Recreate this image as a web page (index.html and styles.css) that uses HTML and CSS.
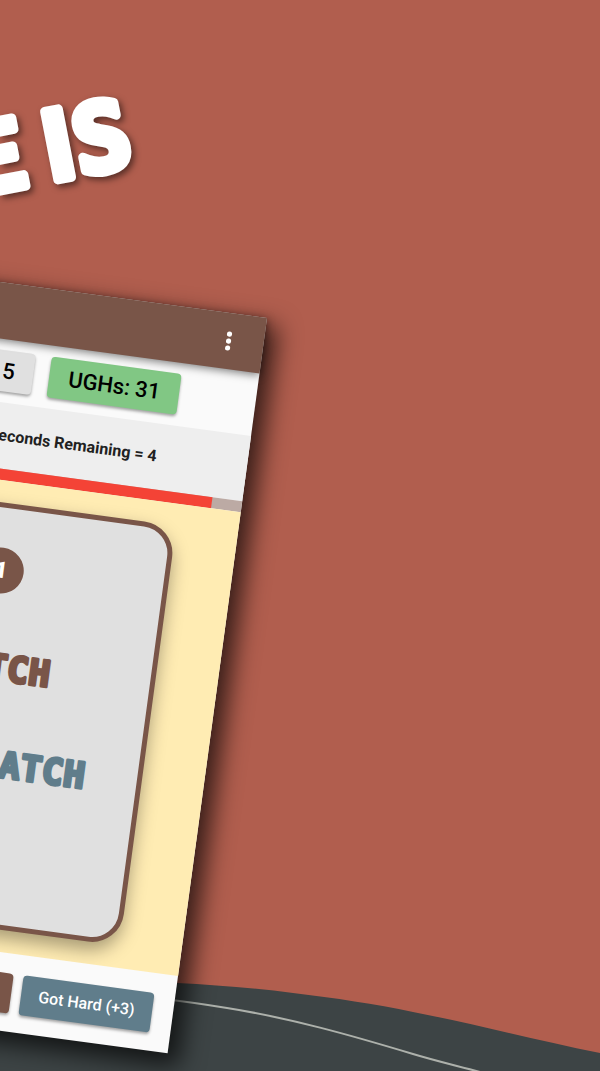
FILE: index.html
```html
<!DOCTYPE html>
<html lang="en">
<head>
<meta charset="utf-8">
<meta name="viewport" content="width=device-width, initial-scale=1">
<title>Game preview</title>
<link rel="stylesheet" href="styles.css">
</head>
<body>
<main class="scene">
  <svg class="ground" viewBox="0 0 600 91" preserveAspectRatio="none" aria-hidden="true">
    <path d="M0 0C60 0 120 0 177 3C215 5 255 8 293 13C335 18 375 24 413 32C475 44 535 60 600 73V91H0Z" fill="#3d4445"/>
    <path d="M100 13C150 16 190 22 227 28C290 38 350 55 413 74C436 81 458 86 480 92" fill="none" stroke="#adb1ab" stroke-width="2"/>
  </svg>

  <h1 class="headline">
    <svg class="headline-art" width="200" height="240" viewBox="0 0 200 240">
      <g transform="rotate(-11 0 191)">
        <text x="32" y="191" text-anchor="end">E</text>
        <text x="138" y="191" text-anchor="end">I<tspan class="headline-round">S</tspan></text>
      </g>
    </svg>
  </h1>

  <section class="phone">
    <header class="appbar">
      <button class="more" type="button" aria-label="More options">
        <svg class="more-icon" viewBox="0 0 6 20" aria-hidden="true">
          <circle cx="3" cy="3" r="2.6"/><circle cx="3" cy="10" r="2.6"/><circle cx="3" cy="17" r="2.6"/>
        </svg>
      </button>
    </header>
    <div class="scores">
      <span class="chip chip-grey">5</span>
      <span class="chip chip-green">UGHs: 31</span>
    </div>
    <p class="timer">Seconds Remaining = 4</p>
    <div class="track"><div class="track-fill"></div></div>
    <div class="board">
      <article class="card">
        <span class="badge">1</span>
        <svg class="word word-easy" width="120" height="48"><text x="100%" y="40" text-anchor="end">TCH</text></svg>
        <svg class="word word-hard" width="120" height="48"><text x="100%" y="40" text-anchor="end">ATCH</text></svg>
      </article>
    </div>
    <footer class="actions">
      <button class="action action-easy" type="button" aria-label="Got easy"></button>
      <button class="action action-hard" type="button">Got Hard (+3)</button>
    </footer>
  </section>
</main>
</body>
</html>
```
FILE: styles.css
```css
* {
  box-sizing: border-box;
}

body {
  margin: 0;
  background: #b15e4e;
  font-family: Roboto, "Liberation Sans", sans-serif;
}

.scene {
  position: relative;
  display: flex;
  flex-direction: column;
  justify-content: flex-end;
  min-height: 100vh;
  overflow: hidden;
}

.ground {
  display: block;
  width: 100%;
  height: 91px;
}

/* Tilted headline, running in from the left edge */
.headline {
  position: absolute;
  top: 0;
  left: 0;
  margin: 0;
}

.headline-art {
  display: block;
  fill: #fff;
  stroke: #fff;
  stroke-width: 9px;
  stroke-linejoin: round;
  font: bold 94px "Noto Sans CJK JP", "Liberation Sans", sans-serif;
  filter: drop-shadow(3px 3px 3px rgba(0, 0, 0, 0.5));
}

.headline-round {
  font-family: "DejaVu Sans Mono", "Liberation Mono", monospace;
}

/* Tilted phone, hung from its top right corner */
.phone {
  position: absolute;
  top: 318px;
  left: -193px;
  display: flex;
  flex-direction: column;
  width: 460px;
  background: #fafafa;
  box-shadow: 10px 10px 24px 2px rgba(0, 0, 0, 0.7);
  transform: rotate(7.7deg);
  transform-origin: top right;
}

.appbar {
  position: relative;
  display: flex;
  align-items: center;
  justify-content: flex-end;
  height: 56px;
  padding-right: 24px;
  background: #795548;
  box-shadow: 0 2px 8px rgba(0, 0, 0, 0.5);
}

.more {
  display: flex;
  justify-content: center;
  width: 22px;
  padding: 0;
  border: 0;
  background: none;
}

.more-icon {
  width: 6px;
  height: 20px;
  fill: #fff;
}

.scores {
  display: flex;
  justify-content: flex-end;
  gap: 16px;
  padding: 11px 77px;
}

.chip {
  padding: 0 19px;
  border-radius: 4px;
  box-shadow: 0 2px 3px rgba(0, 0, 0, 0.35);
  color: #000;
  font-size: 22px;
  font-weight: 500;
  line-height: 41px;
}

.chip-grey {
  background: #e0e0e0;
}

.chip-green {
  background: #81c784;
}

.timer {
  margin: 0;
  padding-right: 91px;
  background: #eee;
  color: #212121;
  font-size: 16px;
  font-weight: 700;
  line-height: 66px;
  text-align: right;
}

.track {
  height: 11px;
  padding-right: 30px;
  background: #bcaaa4;
}

.track-fill {
  height: 100%;
  background: #f44336;
}

.board {
  padding: 22px 62px;
  background: #ffecb3;
  overflow: hidden;
}

.card {
  display: flex;
  flex-direction: column;
  height: 424px;
  padding: 40px 52px;
  border: 5px solid #795548;
  border-radius: 32px;
  background: #e0e0e0;
  box-shadow: 0 8px 18px rgba(0, 0, 0, 0.35);
}

.badge {
  align-self: center;
  width: 46px;
  margin-bottom: 46px;
  border-radius: 50%;
  background: #795548;
  color: #fff;
  font: 900 23px/46px Roboto, "Liberation Sans", sans-serif;
  text-align: center;
}

.word {
  align-self: flex-end;
  overflow: visible;
  font: bold 36px "DejaVu Sans Mono", "Liberation Mono", monospace;
  fill: currentColor;
  stroke: currentColor;
  stroke-width: 3px;
  stroke-linejoin: round;
}

.word-easy {
  margin: 0 48px 48px 0;
  color: #795548;
}

.word-hard {
  color: #607d8b;
}

.actions {
  display: flex;
  justify-content: flex-end;
  gap: 10px;
  padding: 20px 21px 18px;
}

.action {
  width: 132px;
  height: 40px;
  padding: 0;
  border: 0;
  border-radius: 4px;
  box-shadow: 0 2px 3px rgba(0, 0, 0, 0.35);
  color: #fff;
  font: 500 16px/40px Roboto, "Liberation Sans", sans-serif;
}

.action-easy {
  background: #795548;
}

.action-hard {
  background: #607d8b;
}
```
